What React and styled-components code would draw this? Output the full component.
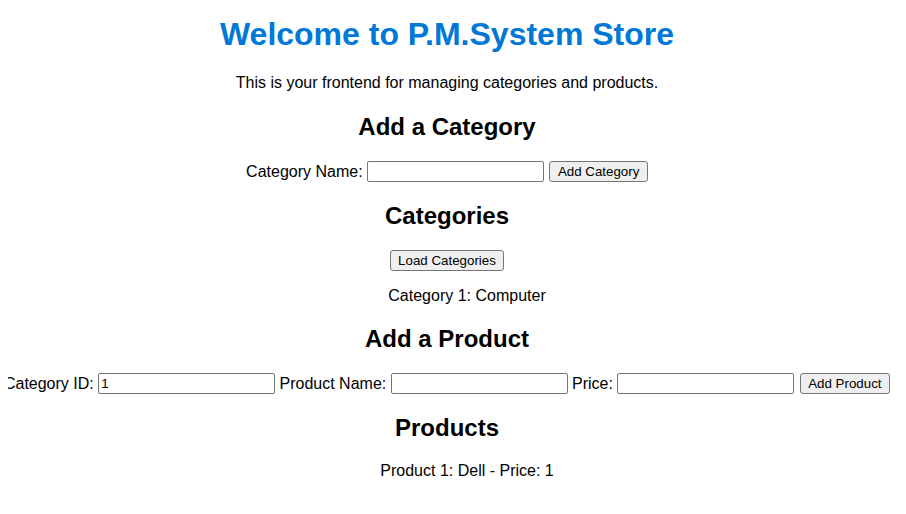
import React from "react";
import styled, { createGlobalStyle } from "styled-components";

const Global = createGlobalStyle`
  html, body { background: #fff; }
  body {
    margin: 8px;
    font-family: "Liberation Sans", Arial, sans-serif;
    color: #000;
  }
`;

const Page = styled.main`
  width: 878px;
  text-align: center;
`;

const Title = styled.h1`
  font-size: 32px;
  font-weight: bold;
  color: #0078d7;
  margin: 8px 0 21px;
`;

const Intro = styled.p`
  font-size: 16px;
  margin: 21px 0;
`;

const SectionTitle = styled.h2`
  font-size: 24px;
  font-weight: bold;
  margin: 20px 0;
`;

const FormRow = styled.div`
  display: flex;
  justify-content: center;
  align-items: center;
  gap: 4.4px;
  width: 890px;
  margin-left: -6px;
  font-size: 16px;
  white-space: nowrap;
`;

const Label = styled.label`
  flex: none;
  font-size: 16px;
`;

const TextInput = styled.input`
  flex: none;
  box-sizing: border-box;
  width: 177px;
  height: 21px;
  padding: 1px 2px;
  border: 1px solid #767676;
  border-radius: 2px;
  font-family: "Liberation Sans", Arial, sans-serif;
  font-size: 13.33px;
  color: #000;
  background: #fff;
  outline: none;
`;

const Button = styled.button`
  flex: none;
  box-sizing: border-box;
  height: 21px;
  padding: 1px 7.5px;
  border: 1px solid #767676;
  border-radius: 3px;
  background: #efefef;
  font-family: "Liberation Sans", Arial, sans-serif;
  font-size: 13.33px;
  color: #000;
  white-space: nowrap;
  margin-left: ${(p) => (p.$lead ? "1px" : "0")};
`;

const ButtonRow = styled.div`
  display: flex;
  justify-content: center;
`;

const List = styled.ul`
  list-style: none;
  margin: 16px 0;
  padding-left: 40px;
  font-size: 16px;
`;

const Item = styled.li`
  line-height: 18px;
`;

export default function App() {
  return (
    <>
      <Global />
      <Page>
        <Title>Welcome to P.M.System Store</Title>
        <Intro>This is your frontend for managing categories and products.</Intro>

        <SectionTitle>Add a Category</SectionTitle>
        <FormRow>
          <Label>Category Name:</Label>
          <TextInput type="text" defaultValue="" />
          <Button $lead>Add Category</Button>
        </FormRow>

        <SectionTitle>Categories</SectionTitle>
        <ButtonRow>
          <Button>Load Categories</Button>
        </ButtonRow>
        <List>
          <Item>Category 1: Computer</Item>
        </List>

        <SectionTitle>Add a Product</SectionTitle>
        <FormRow>
          <Label>Category ID:</Label>
          <TextInput type="text" defaultValue="1" />
          <Label>Product Name:</Label>
          <TextInput type="text" defaultValue="" />
          <Label>Price:</Label>
          <TextInput type="text" defaultValue="" />
          <Button $lead>Add Product</Button>
        </FormRow>

        <SectionTitle>Products</SectionTitle>
        <List>
          <Item>Product 1: Dell - Price: 1</Item>
        </List>
      </Page>
    </>
  );
}
